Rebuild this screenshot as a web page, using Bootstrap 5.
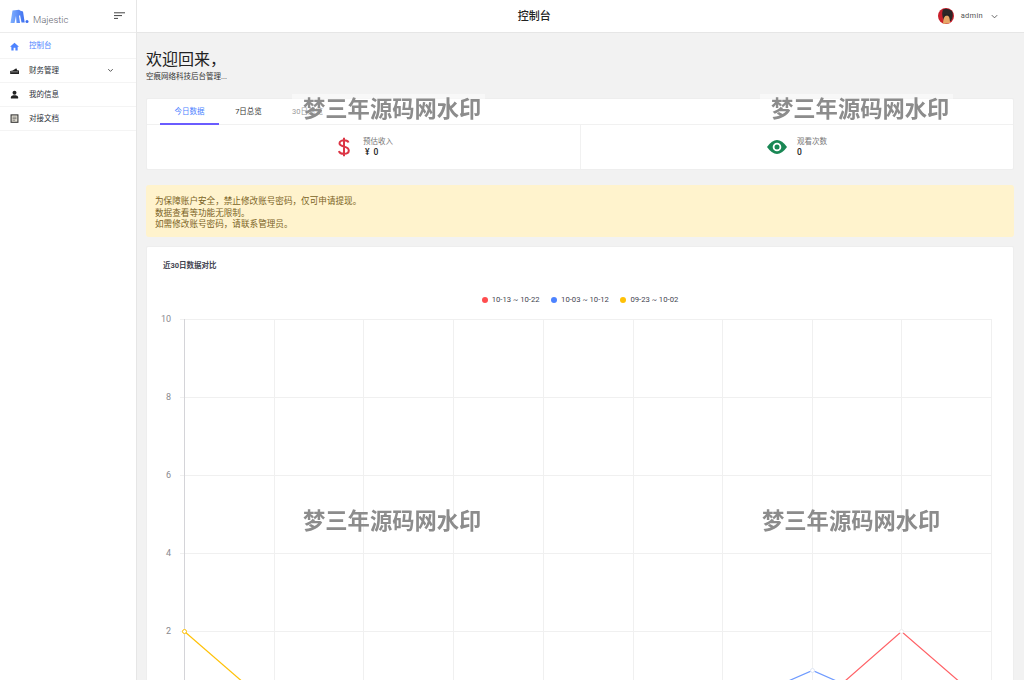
<!DOCTYPE html>
<html lang="zh"><head><meta charset="utf-8"><title>控制台</title>
<link rel="stylesheet" href="https://cdn.jsdelivr.net/npm/bootstrap@5.3.0/dist/css/bootstrap.min.css">
<style>
html,body{height:680px;overflow:hidden}
body{font-family:Roboto,"Noto Sans CJK SC",sans-serif;background:#f2f2f2;color:#212529;font-size:8px;position:relative}
.side{width:137px;flex:none;height:680px;background:#fff;border-right:1px solid #e6e6e6}
.brandbar{height:33px;border-bottom:1px solid #ececec;padding:0 11px 0 10px}
.brandname{font-size:9.5px;color:#5f646e;margin-left:4px;margin-top:8px;font-weight:300}
.mitem{height:24px;padding:0 10px;border-bottom:1px solid #f4f4f4;font-size:7.5px;color:#2b2f38;gap:10px}
.mitem.on{color:#4d83ff;height:26px;padding-top:1px}
.mitem svg{width:9px;height:9px;flex:none}
.mitem .caret{margin-right:11px}
.topbar{height:33px;background:#fff;border-bottom:1px solid #e6e6e6;padding-right:25px}
.toptitle{font-size:11px;font-weight:500;color:#222;padding:3px 6px 0 0}
.avatar{width:16px;height:16px;display:block}
.uname{font-size:7.5px;color:#555;margin:0 7px;letter-spacing:.3px}
.pagebody{padding:16px 10px 0 9px}
.wel{font-size:16px;line-height:21px;margin:0;font-weight:400;color:#222}
.subw{font-size:7.5px;line-height:11px;margin:1px 0 16px;color:#333}
.panel{background:#fff;border:1px solid #eee;border-radius:2px}
.tabrow{height:26px;padding-left:13px;border-bottom:1px solid #f1f1f1}
.tabi{height:26px;width:59px;font-size:7.5px;line-height:26px;text-align:center;color:#333;margin-bottom:-1px}
.tabi.on{color:#4d83ff;border-bottom:2px solid #6a5cff}
.tabi.third{color:#444}
.stat{height:44px;gap:13px;padding-left:4px}
.stat+.stat{border-left:1px solid #f1f1f1;gap:10px;padding-left:0}
.statl{font-size:7.5px;line-height:10px;color:#777}
.statv{font-size:8.5px;line-height:11px;font-weight:500;color:#222}
.statv span{margin:0 4px 0 2px}
.noticebox{margin:15px 0 9px;background:#fff3cd;border-radius:3px;padding:11px 9px 7px;font-size:8.6px;line-height:11.5px;color:#7a6224;height:52px}
.chartcard{height:560px}
.charttitle{font-size:7.5px;font-weight:700;color:#3f4450;padding:13px 16px 0;line-height:11px}
.legendrow{margin-top:23px;gap:11.5px;font-size:7.7px;color:#3f4450;line-height:11px}
.dot{width:6px;height:6px;border-radius:50%;display:inline-block;margin-right:4px}
.chartsvg{display:block;width:866px;height:440px}
.axl{font:9px Roboto,sans-serif;fill:#8a8a8f}
.wm{position:absolute;font-size:22.3px;line-height:26px;padding:0 11px 4px;font-weight:700;color:#8c8c8c;filter:blur(.7px);white-space:nowrap;font-family:"Noto Sans CJK SC",sans-serif}
.wmbg{background:rgba(255,255,255,.45);padding-right:4px}
</style></head>
<body>
<div class="d-flex">
<aside class="side">
 <div class="brandbar d-flex align-items-center">
  <svg width="19" height="15" viewBox="0 0 19 15"><defs><linearGradient id="lg" x1="0" y1="0" x2="1" y2="0"><stop offset="0" stop-color="#7fb0ff"/><stop offset="1" stop-color="#3d6ff0"/></linearGradient></defs><path d="M.5 14 2.500 1.500 7 1l2-.2 1.500 1 2.500.7 1.700 11H11.500L10 6 9 7l1 7H6.500L6 7l-1.500 7z" fill="url(#lg)"/><circle cx="17" cy="12.500" r="1.500" fill="#3d6ff0"/></svg>
  <span class="brandname">Majestic</span>
  <svg class="ms-auto" width="11" height="8" viewBox="0 0 11 8"><path d="M0 .8h11M0 3.600h8M0 6.400h4" stroke="#444" stroke-width="1" fill="none"/></svg>
 </div>
 <div class="mitem on d-flex align-items-center"><svg viewBox="0 0 10 10"><path d="M5 .8 0 5.300h1.500V9.500h2.500V6.500h2v3h2.500V5.300H10z" fill="#4d83ff"/></svg><span>控制台</span></div>
 <div class="mitem d-flex align-items-center"><svg viewBox="0 0 10 10"><path d="M.2 9V5.500L3 5 7 2.500 8 4.800l2 .2V9z" fill="#222"/><path d="M1 6.500h8" stroke="#fff" stroke-width=".5"/></svg><span>财务管理</span><svg class="ms-auto caret" viewBox="0 0 10 10"><path d="m2.500 3.500 2.500 2.500 2.500-2.500" stroke="#444" stroke-width="1" fill="none"/></svg></div>
 <div class="mitem d-flex align-items-center"><svg viewBox="0 0 10 10"><circle cx="5" cy="3" r="2.200" fill="#222"/><path d="M1 9.500V8c0-1.500 2-2.200 4-2.200S9 6.500 9 8v1.500z" fill="#222"/></svg><span>我的信息</span></div>
 <div class="mitem d-flex align-items-center"><svg viewBox="0 0 10 10"><rect x="1.200" y="1" width="7.600" height="8.200" fill="#e8e4d8" stroke="#333" stroke-width="1.200"/><path d="M2.800 3.500h4.400M2.800 5.200h4.400M2.800 6.900h3" stroke="#555" stroke-width=".8"/></svg><span>对接文档</span></div>
</aside>
<main class="flex-grow-1" style="min-width:0">
 <header class="topbar d-flex align-items-center">
  <div class="toptitle flex-grow-1 text-center">控制台</div>
  <svg class="avatar" viewBox="0 0 16 16"><circle cx="8" cy="8" r="8" fill="#c8202c"/><path d="M5 1.500 Q9-.5 14 3 16 8 13 13H6Q3 7 5 1.500z" fill="#2b2626"/><path d="M5 16 Q5 8 9 7 12 8 12 15z" fill="#e6a766"/><path d="M6 7h6" stroke="#222" stroke-width="1.200"/></svg>
  <span class="uname">admin</span>
  <svg width="9" height="9" viewBox="0 0 10 10"><path d="m2 3.500 3 3 3-3" stroke="#555" stroke-width="1" fill="none"/></svg>
 </header>
 <div class="pagebody">
  <h1 class="wel">欢迎回来，</h1>
  <p class="subw">空痕网络科技后台管理...</p>
  <section class="panel">
   <div class="tabrow d-flex"><div class="tabi on">今日数据</div><div class="tabi">7日总览</div><div class="tabi third">30日总览</div></div>
   <div class="d-flex">
    <div class="stat w-50 d-flex align-items-center justify-content-center">
     <svg width="12" height="20" viewBox="0 0 12 20"><path d="M10.500 5.500C10 4 8 3.300 6 3.300S1.500 4.300 1.500 6.300 3.500 9 6 9.600s4.800 1.400 4.800 3.800S8.500 16.800 6 16.800 1.300 15.800 1 14M6 .8v18.400" fill="none" stroke="#dc3545" stroke-width="2"/></svg>
     <div><div class="statl">预估收入</div><div class="statv"><span>¥</span>0</div></div>
    </div>
    <div class="stat w-50 d-flex align-items-center justify-content-center">
     <svg width="20" height="14" viewBox="0 0 20 14"><path d="M0 7Q5 0 10 0t10 7Q15 14 10 14T0 7z" fill="#198754"/><circle cx="10" cy="7" r="4.300" fill="#fff"/><circle cx="10" cy="7" r="2.500" fill="#198754"/></svg>
     <div><div class="statl">观看次数</div><div class="statv">0</div></div>
    </div>
   </div>
  </section>
  <div class="noticebox">为保障账户安全，禁止修改账号密码，仅可申请提现。<br>数据查看等功能无限制。<br>如需修改账号密码，请联系管理员。</div>
  <section class="panel chartcard">
   <div class="charttitle">近30日数据对比</div>
   <div class="legendrow d-flex justify-content-center">
    <span class="d-flex align-items-center"><i class="dot" style="background:#ff4d4f"></i>10-13 ~ 10-22</span>
    <span class="d-flex align-items-center"><i class="dot" style="background:#4d83ff"></i>10-03 ~ 10-12</span>
    <span class="d-flex align-items-center"><i class="dot" style="background:#ffc107"></i>09-23 ~ 10-02</span>
   </div>
   <svg class="chartsvg" viewBox="147 305 866 440">
    <g stroke="#f0f0f0" stroke-width="1" fill="none">
     <path d="M180 319.500H992M180 397.500H992M180 475.500H992M180 553.500H992M180 631.500H992M180 709.500H992"/>
     <path d="M274.500 319V709M363.500 319V709M453.500 319V709M543.500 319V709M633.500 319V709M722.500 319V709M812.500 319V709M901.500 319V709M991.500 319V709"/>
    </g>
    <path d="M184.500 319V715" stroke="#d4d4d8"/>
    <g class="axl" text-anchor="end"><text x="171" y="322">10</text><text x="171" y="400">8</text><text x="171" y="478">6</text><text x="171" y="556">4</text><text x="171" y="634">2</text></g>
    <g fill="none" stroke-width="1.200">
     <path d="M184.500 631.500 274.500 709.500" stroke="#ffc107"/>
     <path d="M722.500 709.500 812.500 670.500 901.500 709.500" stroke="#6f9bff"/>
     <path d="M812.500 709.500 901.500 631.500 991.500 709.500" stroke="#ff6166"/>
    </g>
    <circle cx="184.500" cy="631.500" r="2" fill="#fff" stroke="#ffc107"/>
    <circle cx="812.500" cy="670.500" r="2" fill="#fff" stroke="#dfe6f5"/>
    <circle cx="901.500" cy="631.500" r="2" fill="#fff" stroke="#eee"/>
   </svg>
  </section>
 </div>
</main>
</div>
<div class="wm wmbg" style="left:292px;top:94px">梦三年源码网水印</div>
<div class="wm wmbg" style="left:760px;top:94px">梦三年源码网水印</div>
<div class="wm" style="left:292px;top:506px">梦三年源码网水印</div>
<div class="wm" style="left:751px;top:506px">梦三年源码网水印</div>
<script src="https://cdn.jsdelivr.net/npm/bootstrap@5.3.0/dist/js/bootstrap.bundle.min.js"></script>
</body></html>
